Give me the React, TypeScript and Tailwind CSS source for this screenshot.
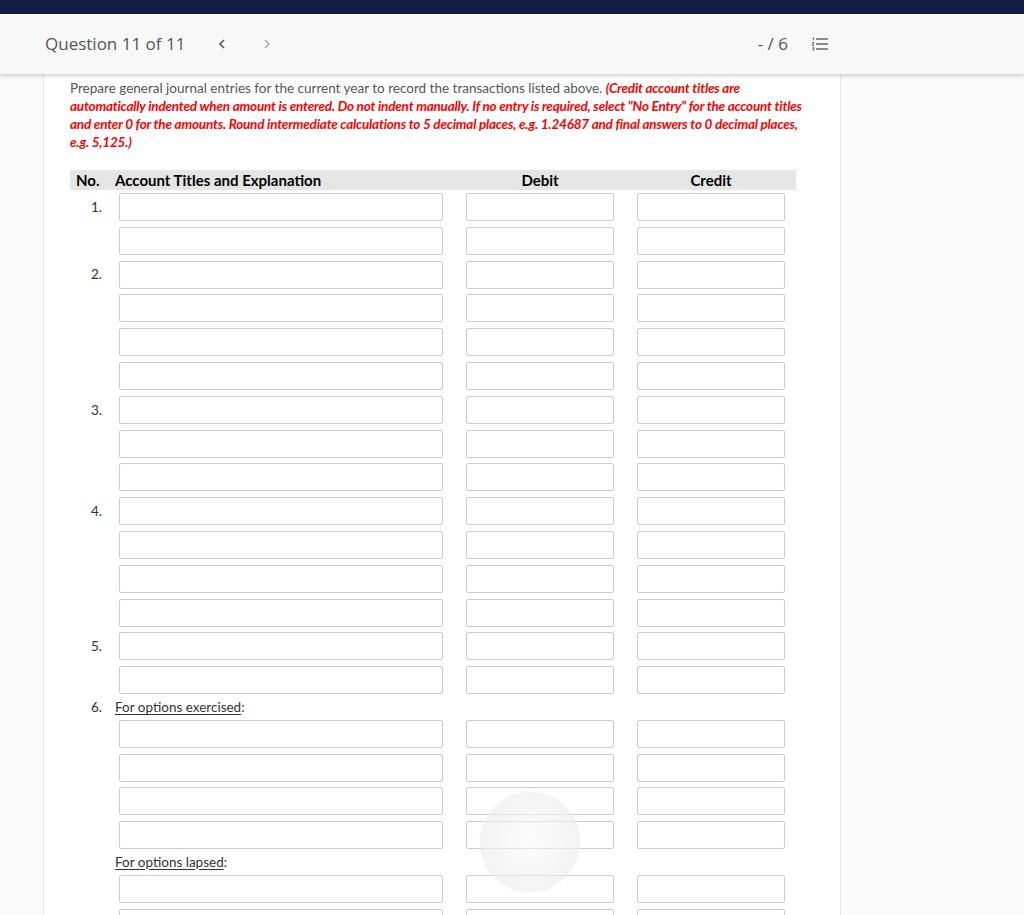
import React from 'react'

type Block =
  | { kind: 'entry'; no?: string; rows: number }
  | { kind: 'label'; no?: string; text: string; rows: number }

const BLOCKS: Block[] = [
  { kind: 'entry', no: '1.', rows: 2 },
  { kind: 'entry', no: '2.', rows: 4 },
  { kind: 'entry', no: '3.', rows: 3 },
  { kind: 'entry', no: '4.', rows: 4 },
  { kind: 'entry', no: '5.', rows: 2 },
  { kind: 'label', no: '6.', text: 'For options exercised', rows: 4 },
  { kind: 'label', text: 'For options lapsed', rows: 2 },
]

function Field({ w }: { w: string }) {
  return <input type="text" className={`${w} h-[28px] border border-[#cccccc] rounded-[2px] bg-white outline-none`} />
}

function EntryRow({ no }: { no?: string }) {
  return (
    <div className="flex items-center h-[28px] mt-[5.8px] first:mt-0">
      <div className="w-[49px] pr-[17px] text-right text-[13.5px] text-[#333]">{no}</div>
      <Field w="w-[324px]" />
      <div className="w-[23px]" />
      <Field w="w-[148px]" />
      <div className="w-[23px]" />
      <Field w="w-[148px]" />
    </div>
  )
}

export default function App() {
  const font = { fontFamily: 'Lato, "Open Sans", sans-serif' }
  return (
    <div className="w-[1024px] h-[915px] overflow-hidden relative bg-white" style={font}>
      <div className="h-[14px] bg-[#131e46]" />
      <div className="relative z-10 h-[60px] bg-[#f8f8f8] shadow-[0_2px_4px_rgba(0,0,0,0.18)] flex items-center pl-[45px] pr-[195px]" style={{ fontFamily: '"Open Sans", sans-serif' }}>
        <span className="text-[17px] text-[#555]">Question 11 of 11</span>
        <svg className="ml-[32px]" width="10" height="14" viewBox="0 0 10 14" fill="none">
          <path d="M7 3 L3 7 L7 11" stroke="#555" strokeWidth="1.6" />
        </svg>
        <svg className="ml-[35px]" width="10" height="14" viewBox="0 0 10 14" fill="none">
          <path d="M3 3 L7 7 L3 11" stroke="#aaa" strokeWidth="1.6" />
        </svg>
        <div className="flex-1" />
        <span className="text-[17px] text-[#555]">- / 6</span>
        <svg className="ml-[23px]" width="18" height="16" viewBox="0 0 18 16" fill="none">
          <path d="M1.5 2.5 L2.5 1.5 V4.5" stroke="#666" strokeWidth="0.9" />
          <path d="M1.2 6.5 H3 V8 H1.2 V9.5 H3" stroke="#666" strokeWidth="0.8" />
          <path d="M1.2 11.2 H3 V14.2 H1.2 M1.5 12.7 H3" stroke="#666" strokeWidth="0.8" />
          <path d="M5 3 H17 M5 8 H17 M5 13 H17" stroke="#666" strokeWidth="1.7" />
        </svg>
      </div>

      <div className="flex h-full">
        <div className="w-[44px] bg-[#fafafa] border-r border-[#e6e6e6]" />
        <div className="w-[796px] bg-white pl-[26px] pt-[5px]">
          <p className="w-[738px] text-[13.5px] leading-[18px] text-[#555]">
            Prepare general journal entries for the current year to record the transactions listed above.{' '}
            <span className="italic font-bold text-[#ff0000] tracking-[-0.2px]">
              (Credit account titles are automatically indented when amount is entered. Do not indent manually. If no entry is required, select "No Entry" for the account titles and enter 0 for the amounts. Round intermediate calculations to 5 decimal places, e.g. 1.24687 and final answers to 0 decimal places, e.g. 5,125.)
            </span>
          </p>

          <div className="mt-[19px] w-[726px] h-[20px] bg-[#e5e5e5] flex items-center text-[15px] font-bold text-black">
            <div className="w-[45px] pl-[6px]">No.</div>
            <div className="w-[351px]">Account Titles and Explanation</div>
            <div className="w-[148px] text-center">Debit</div>
            <div className="w-[23px]" />
            <div className="w-[148px] text-center">Credit</div>
          </div>

          <div className="mt-[3px] flex flex-col">
            {BLOCKS.map((b, i) => (
              <div key={i} className="flex flex-col mt-[5.8px] first:mt-0">
                {b.kind === 'label' && (
                  <div className="flex items-center h-[14px]">
                    <div className="w-[49px] pr-[17px] text-right text-[13.5px] text-[#333]">{b.no}</div>
                    <div className="-ml-[4px] text-[13.5px] text-[#333]">
                      <span className="underline underline-offset-2">{b.text}</span>:
                    </div>
                  </div>
                )}
                {Array.from({ length: b.rows }).map((_, r) => (
                  <EntryRow key={r} no={r === 0 && b.kind === 'entry' ? b.no : undefined} />
                ))}
              </div>
            ))}
          </div>
        </div>
        <div className="flex-1 bg-[#fafafa] border-l border-[#e6e6e6]" />
      </div>

      <div className="absolute left-[480px] top-[792px] w-[100px] h-[100px] rounded-full bg-[radial-gradient(circle,rgba(250,250,250,0.55)_0%,rgba(232,232,232,0.7)_100%)] shadow-[0_0_2px_rgba(0,0,0,0.05)]" />
    </div>
  )
}
